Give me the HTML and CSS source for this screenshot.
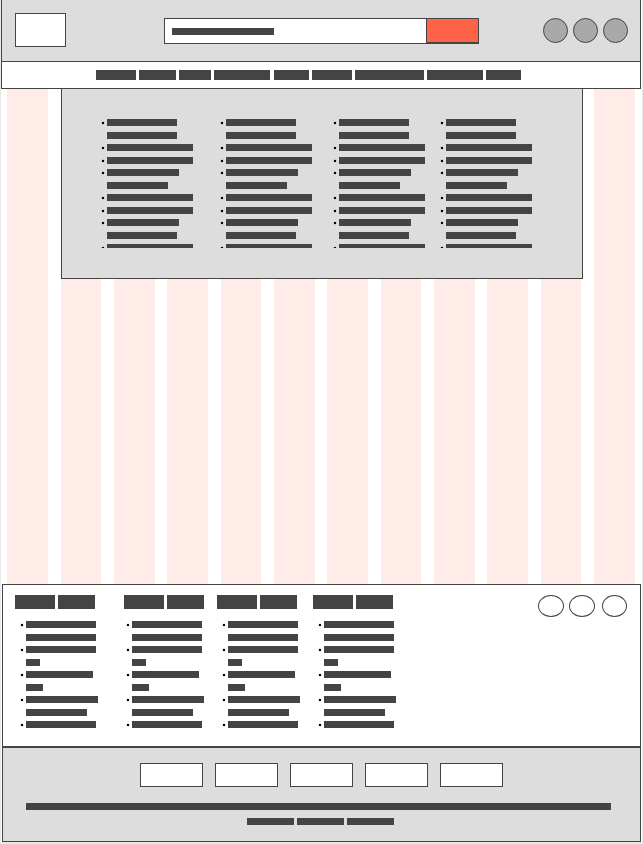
FILE: index.html
```html
<!DOCTYPE html>
<html lang="en">
<head>
<meta charset="utf-8">
<meta name="viewport" content="width=device-width, initial-scale=1">
<title>Store wireframe</title>
<link rel="stylesheet" href="styles.css">
</head>
<body>
<div class="page">
  <header class="header">
    <a class="logo" href="#" aria-label="Home"></a>
    <form class="search" role="search">
      <label class="search-field">
        <input type="search" aria-label="Search">
        <span class="bar w102"></span>
      </label>
      <button type="button" aria-label="Submit search"></button>
    </form>
    <div class="actions">
      <a href="#" aria-label="Account"></a>
      <a href="#" aria-label="Favourites"></a>
      <a href="#" aria-label="Cart"></a>
    </div>
  </header>
  <nav class="nav" aria-label="Categories">
    <a href="#" class="bar w40"></a><a href="#" class="bar w37"></a><a href="#" class="bar w32"></a><a href="#" class="bar w56"></a><a href="#" class="bar w35"></a><a href="#" class="bar w40"></a><a href="#" class="bar w69"></a><a href="#" class="bar w56"></a><a href="#" class="bar w35"></a>
  </nav>
  <main class="main">
    <div class="columns"><i></i><i></i><i></i><i></i><i></i><i></i><i></i><i></i><i></i><i></i><i></i><i></i></div>
    <section class="menu">
      <ul class="list">
        <li class="double"><span class="bar w70"></span><span class="bar w70"></span></li>
        <li><span class="bar w86"></span></li>
        <li><span class="bar w86"></span></li>
        <li class="double"><span class="bar w72"></span><span class="bar w61"></span></li>
        <li><span class="bar w86"></span></li>
        <li><span class="bar w86"></span></li>
        <li class="double"><span class="bar w72"></span><span class="bar w70"></span></li>
        <li><span class="bar w86"></span></li>
      </ul>
      <ul class="list">
        <li class="double"><span class="bar w70"></span><span class="bar w70"></span></li>
        <li><span class="bar w86"></span></li>
        <li><span class="bar w86"></span></li>
        <li class="double"><span class="bar w72"></span><span class="bar w61"></span></li>
        <li><span class="bar w86"></span></li>
        <li><span class="bar w86"></span></li>
        <li class="double"><span class="bar w72"></span><span class="bar w70"></span></li>
        <li><span class="bar w86"></span></li>
      </ul>
      <ul class="list">
        <li class="double"><span class="bar w70"></span><span class="bar w70"></span></li>
        <li><span class="bar w86"></span></li>
        <li><span class="bar w86"></span></li>
        <li class="double"><span class="bar w72"></span><span class="bar w61"></span></li>
        <li><span class="bar w86"></span></li>
        <li><span class="bar w86"></span></li>
        <li class="double"><span class="bar w72"></span><span class="bar w70"></span></li>
        <li><span class="bar w86"></span></li>
      </ul>
      <ul class="list">
        <li class="double"><span class="bar w70"></span><span class="bar w70"></span></li>
        <li><span class="bar w86"></span></li>
        <li><span class="bar w86"></span></li>
        <li class="double"><span class="bar w72"></span><span class="bar w61"></span></li>
        <li><span class="bar w86"></span></li>
        <li><span class="bar w86"></span></li>
        <li class="double"><span class="bar w72"></span><span class="bar w70"></span></li>
        <li><span class="bar w86"></span></li>
      </ul>
    </section>
  </main>
  <footer class="footer">
    <div class="links">
      <div class="groups">
        <section>
          <h2><span class="bar w40"></span><span class="bar w37"></span></h2>
          <ul class="list">
            <li class="double"><span class="bar w70"></span><span class="bar w70"></span></li>
            <li class="double"><span class="bar w70"></span><span class="bar w14"></span></li>
            <li class="double"><span class="bar w67"></span><span class="bar w17"></span></li>
            <li class="double"><span class="bar w72"></span><span class="bar w61"></span></li>
            <li><span class="bar w70"></span></li>
          </ul>
        </section>
        <section>
          <h2><span class="bar w40"></span><span class="bar w37"></span></h2>
          <ul class="list tight">
            <li class="double"><span class="bar w70"></span><span class="bar w70"></span></li>
            <li class="double"><span class="bar w70"></span><span class="bar w14"></span></li>
            <li class="double"><span class="bar w67"></span><span class="bar w17"></span></li>
            <li class="double"><span class="bar w72"></span><span class="bar w61"></span></li>
            <li><span class="bar w70"></span></li>
          </ul>
        </section>
        <section>
          <h2><span class="bar w40"></span><span class="bar w37"></span></h2>
          <ul class="list">
            <li class="double"><span class="bar w70"></span><span class="bar w70"></span></li>
            <li class="double"><span class="bar w70"></span><span class="bar w14"></span></li>
            <li class="double"><span class="bar w67"></span><span class="bar w17"></span></li>
            <li class="double"><span class="bar w72"></span><span class="bar w61"></span></li>
            <li><span class="bar w70"></span></li>
          </ul>
        </section>
        <section>
          <h2><span class="bar w40"></span><span class="bar w37"></span></h2>
          <ul class="list">
            <li class="double"><span class="bar w70"></span><span class="bar w70"></span></li>
            <li class="double"><span class="bar w70"></span><span class="bar w14"></span></li>
            <li class="double"><span class="bar w67"></span><span class="bar w17"></span></li>
            <li class="double"><span class="bar w72"></span><span class="bar w61"></span></li>
            <li><span class="bar w70"></span></li>
          </ul>
        </section>
      </div>
      <div class="social">
        <a href="#" aria-label="Social link 1"></a>
        <a href="#" aria-label="Social link 2"></a>
        <a href="#" aria-label="Social link 3"></a>
      </div>
    </div>
    <div class="legal">
      <div class="badges"><span></span><span></span><span></span><span></span><span></span></div>
      <div class="bar notice"></div>
      <div class="legal-links"><a href="#" class="bar w47"></a><a href="#" class="bar w47"></a><a href="#" class="bar w47"></a></div>
    </div>
  </footer>
</div>
</body>
</html>
```
FILE: styles.css
```css
:root {
  --ink: #444;
  --panel: #ddd;
}

* { box-sizing: border-box; }

body {
  margin: 0;
  background: #e8e8e8;
  font-family: "Liberation Sans", sans-serif;
}

.page {
  display: flex;
  flex-direction: column;
  min-height: calc(100vh - 2px);
  margin: 0 1px 2px;
  padding-right: 1px;
  background: #fff;
}

/* Placeholder bars and their widths */
.bar { display: block; height: 7px; background: var(--ink); }
.w14 { width: 14px; }
.w17 { width: 17px; }
.w32 { width: 32px; }
.w35 { width: 35px; }
.w37 { width: 37px; }
.w40 { width: 40px; }
.w47 { width: 47px; }
.w56 { width: 56px; }
.w61 { width: 61px; }
.w67 { width: 67px; }
.w69 { width: 69px; }
.w70 { width: 70px; }
.w72 { width: 72px; }
.w86 { width: 86px; }
.w102 { width: 102px; }

/* Header */
.header {
  display: flex;
  align-items: flex-start;
  justify-content: space-between;
  height: 61px;
  padding: 13px 12px 0 13px;
  border: solid var(--ink);
  border-width: 0 1px;
  background: var(--panel);
}

.logo {
  width: 51px;
  height: 34px;
  border: 1px solid var(--ink);
  background: #fff;
}

.search {
  display: flex;
  width: 315px;
  height: 26px;
  margin: 5px 0 0 33px;
  border: 1px solid var(--ink);
  background: #fff;
}

.search-field {
  display: grid;
  flex: 1;
  align-items: center;
}

.search-field > * { grid-area: 1 / 1; }
.search-field .bar { margin-left: 7px; pointer-events: none; }

.search input {
  width: 100%;
  height: 24px;
  margin: 0;
  padding: 0 7px;
  border: 0;
  background: transparent;
  appearance: none;
}

.search button {
  width: 53px;
  margin-right: -1px;
  padding: 0;
  border: 1px solid var(--ink);
  border-top: 0;
  background: #ff6347;
}

.actions { display: flex; gap: 5px; margin-top: 5px; }

.actions a {
  width: 25px;
  height: 25px;
  border: 1px solid var(--ink);
  border-radius: 50%;
  background: #a9a9a9;
}

/* Category navigation */
.nav {
  display: flex;
  gap: 3px;
  height: 28px;
  padding: 8px 94px;
  border: 1px solid var(--ink);
  background: #fff;
}

.nav .bar { height: 10px; }

.nav .w56 + .w35:not(:last-child) { margin-left: 1px; }

/* Column guides with the open menu over them */
.main {
  display: grid;
  flex: 1;
}

.main > * { grid-area: 1 / 1; }

.columns {
  display: grid;
  grid-template-columns: repeat(12, 1fr);
}

.columns i { margin: 0 12%; background: #ffebe8; }

.menu {
  display: grid;
  grid-template-columns: 119px 113px 107px 1fr;
  align-self: start;
  margin: 0 58px 0 60px;
  padding: 30px 39px;
  border: solid var(--ink);
  border-width: 0 1px 1px;
  background: var(--panel);
}

.menu .list { height: 129px; overflow: hidden; }

.list {
  display: grid;
  grid-auto-rows: 13px 12px;
  margin: 0;
  padding: 0;
  list-style: none;
}

.list li {
  display: grid;
  grid-template-columns: 6px 1fr;
  grid-template-rows: subgrid;
}

.list .double { grid-row: span 2; }
.list .bar { grid-column: 2; }

.list li::before {
  content: "";
  width: 2px;
  height: 2px;
  margin: 3px 0 0 1px;
  background: #000;
  box-shadow: 0 0 1px #000;
}

/* Footer */
.footer {
  margin-left: 1px;
  border: 1px solid var(--ink);
}

.links {
  display: flex;
  justify-content: space-between;
  height: 163px;
  padding: 10px 13px 0 12px;
  border-bottom: 2px solid var(--ink);
  background: #fff;
}

.groups {
  display: grid;
  grid-template-columns: 109px 93px 96px 1fr;
}

.groups h2 { display: flex; gap: 3px; margin: 0 0 12px; }
.groups h2 .bar { height: 14px; }
.groups .list { margin-left: 5px; }
.groups .tight { margin-left: 2px; }

.social { display: flex; gap: 5px; }

.social a {
  width: 26px;
  height: 22px;
  border: 1px solid var(--ink);
  border-radius: 50%;
}

.social a:last-child { width: 25px; margin-left: 2px; }

.legal {
  padding: 15px 29px 16px 23px;
  background: var(--panel);
}

.badges {
  display: flex;
  justify-content: center;
  gap: 12px;
  padding-left: 6px;
}

.badges span {
  width: 63px;
  height: 24px;
  border: 1px solid var(--ink);
  background: #fff;
}

.notice { margin-top: 16px; }

.legal-links {
  display: flex;
  justify-content: center;
  gap: 3px;
  margin-top: 8px;
  padding-left: 4px;
}
```
